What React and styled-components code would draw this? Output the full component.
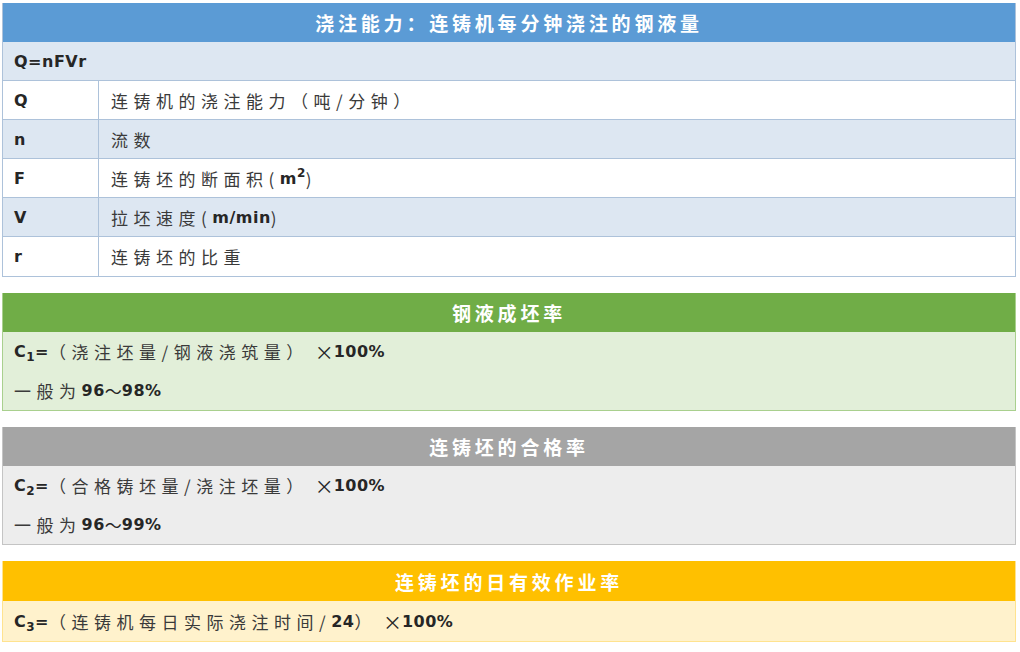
import React from 'react'
import styled, { createGlobalStyle } from 'styled-components'

const GlobalStyle = createGlobalStyle`
  body {
    margin: 0;
    background: #ffffff;
    font-family: "Noto Sans CJK SC", "DejaVu Sans", sans-serif;
  }
`

const tones = {
  blue: { head: '#5b9bd5', body: '#dde7f2', line: '#adc2da' },
  green: { head: '#70ad47', body: '#e2efd9', line: '#a9d08e' },
  gray: { head: '#a5a5a5', body: '#ededed', line: '#c4c4c4' },
  yellow: { head: '#ffc000', body: '#fff2cc', line: '#ffe38f' },
}

const Page = styled.div`
  display: flex;
  flex-direction: column;
  gap: 16px;
  width: 1014px;
  padding: 3px 0 0 2px;
`

const Table = styled.div`
  display: flex;
  flex-direction: column;
  border: 1px solid ${p => tones[p.$tone].line};
  border-top: none;
`

const Head = styled.div`
  height: ${p => (p.$tall ? '40px' : '39px')};
  display: flex;
  align-items: center;
  justify-content: center;
  background: ${p => tones[p.$tone].head};
  color: #ffffff;
  font-size: 19px;
  font-weight: 700;
  letter-spacing: 3.8px;
`

const Row = styled.div`
  height: ${p => (p.$tall ? '40px' : '39px')};
  box-sizing: border-box;
  display: grid;
  grid-template-columns: ${p => (p.$split ? '95px 1fr' : '1fr')};
  background: ${p => (p.$plain ? '#ffffff' : tones[p.$tone].body)};
  border-bottom: ${p => (p.$lined ? `1px solid ${tones[p.$tone].line}` : 'none')};
  &:last-child {
    border-bottom: none;
  }
`

const Cell = styled.div`
  display: flex;
  align-items: center;
  padding-left: ${p => (p.$text ? '12px' : '11px')};
  border-left: ${p => (p.$text ? `1px solid ${tones.blue.line}` : 'none')};
  font-size: 17px;
  color: #3a3a3a;
  letter-spacing: 5.5px;
`

const Lat = styled.span`
  font-family: "DejaVu Sans", sans-serif;
  font-weight: 700;
  font-size: 16px;
  letter-spacing: 0.5px;
  color: #262626;
`

const Wave = styled.span`
  letter-spacing: 0;
  color: #262626;
`

const Times = styled.span`
  font-size: 19px;
  letter-spacing: 0;
  margin-left: 6px;
  color: #262626;
`

const Sub = styled.sub`
  font-size: 12px;
  vertical-align: -4px;
  line-height: 0;
`

const Sup = styled.sup`
  font-size: 12px;
  vertical-align: 7px;
  line-height: 0;
`

const vars = [
  ['Q', '连铸机的浇注能力（吨/分钟）'],
  ['n', '流数'],
  ['F', <>连铸坯的断面积(<Lat>m<Sup>2</Sup></Lat>)</>],
  ['V', <>拉坯速度(<Lat>m/min</Lat>)</>],
  ['r', '连铸坯的比重'],
]

const rates = [
  {
    tone: 'green',
    title: '钢液成坯率',
    n: 1,
    formula: '（浇注坯量/钢液浇筑量）',
    range: ['96', '98%'],
  },
  {
    tone: 'gray',
    title: '连铸坯的合格率',
    n: 2,
    formula: '（合格铸坯量/浇注坯量）',
    range: ['96', '99%'],
  },
  {
    tone: 'yellow',
    title: '连铸坯的日有效作业率',
    n: 3,
    tall: true,
    formula: <>（连铸机每日实际浇注时间/<Lat>24</Lat>）</>,
  },
]

export default function App() {
  return (
    <Page>
      <GlobalStyle />
      <Table $tone="blue">
        <Head $tone="blue">浇注能力：连铸机每分钟浇注的钢液量</Head>
        <Row $tone="blue" $lined>
          <Cell><Lat>Q=nFVr</Lat></Cell>
        </Row>
        {vars.map(([sym, text], i) => (
          <Row key={sym} $tone="blue" $split $lined $plain={i % 2 === 0}>
            <Cell><Lat>{sym}</Lat></Cell>
            <Cell $text>{text}</Cell>
          </Row>
        ))}
      </Table>
      {rates.map(r => (
        <Table key={r.n} $tone={r.tone}>
          <Head $tone={r.tone} $tall={r.tall}>{r.title}</Head>
          <Row $tone={r.tone} $tall={r.tall}>
            <Cell>
              <Lat>C<Sub>{r.n}</Sub>=</Lat>
              {r.formula}
              <Times>×</Times>
              <Lat>100%</Lat>
            </Cell>
          </Row>
          {r.range && (
            <Row $tone={r.tone}>
              <Cell>
                一般为<Lat>{r.range[0]}</Lat><Wave>～</Wave><Lat>{r.range[1]}</Lat>
              </Cell>
            </Row>
          )}
        </Table>
      ))}
    </Page>
  )
}
